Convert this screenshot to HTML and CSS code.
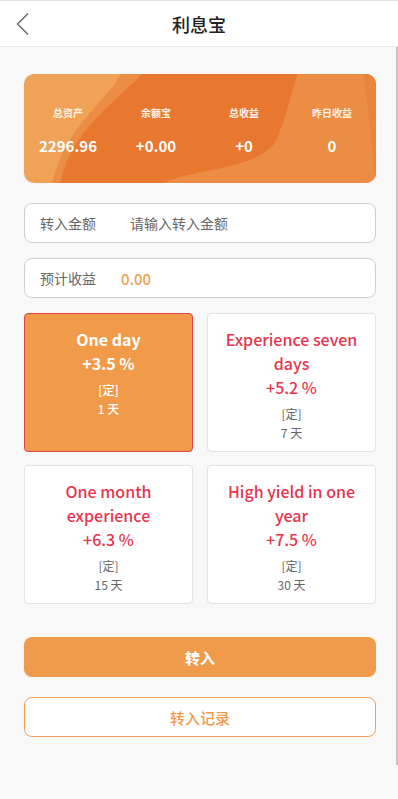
FILE: index.html
```html
<!DOCTYPE html>
<html lang="zh">
<head>
<meta charset="utf-8">
<title>利息宝</title>
<link rel="stylesheet" href="styles.css">
</head>
<body>
<header class="topbar">
  <svg class="back" width="14" height="24" viewBox="0 0 14 24"><path d="M12 1.5 L1.5 12 L12 22.5" fill="none" stroke="#666" stroke-width="1.4"/></svg>
  <h1 class="title">利息宝</h1>
</header>
<main class="main">
  <section class="summary">
    <svg class="waves" viewBox="0 0 352 109" preserveAspectRatio="none">
      <rect width="352" height="109" fill="#f0a257"/>
      <path d="M97 0 C80 30 42 52 28 109 H352 V0 Z" fill="#ec8d45"/>
      <path d="M118 0 C92 28 48 55 36 109 H140 C172 94 228 96 250 70 C262 48 266 20 274 0 Z" fill="#e8782f"/>
      <path d="M340 0 C345 40 348 80 352 109 V0 Z" fill="#e9843b"/>
    </svg>
    <div class="stat"><span class="stat-label">总资产</span><span class="stat-value">2296.96</span></div>
    <div class="stat"><span class="stat-label">余额宝</span><span class="stat-value">+0.00</span></div>
    <div class="stat"><span class="stat-label">总收益</span><span class="stat-value">+0</span></div>
    <div class="stat"><span class="stat-label">昨日收益</span><span class="stat-value">0</span></div>
  </section>

  <div class="field">
    <span class="field-label">转入金额</span>
    <span class="placeholder">请输入转入金额</span>
  </div>
  <div class="field field-gap">
    <span class="field-label">预计收益</span>
    <span class="estimate">0.00</span>
  </div>

  <section class="plans">
    <div class="plan active">
      <div class="plan-name">One day</div>
      <div class="plan-rate">+3.5 %</div>
      <div class="plan-type">[定]</div>
      <div class="plan-days">1 天</div>
    </div>
    <div class="plan">
      <div class="plan-name">Experience seven days</div>
      <div class="plan-rate">+5.2 %</div>
      <div class="plan-type">[定]</div>
      <div class="plan-days">7 天</div>
    </div>
    <div class="plan">
      <div class="plan-name">One month experience</div>
      <div class="plan-rate">+6.3 %</div>
      <div class="plan-type">[定]</div>
      <div class="plan-days">15 天</div>
    </div>
    <div class="plan">
      <div class="plan-name">High yield in one year</div>
      <div class="plan-rate">+7.5 %</div>
      <div class="plan-type">[定]</div>
      <div class="plan-days">30 天</div>
    </div>
  </section>

  <button class="btn btn-primary">转入</button>
  <button class="btn btn-outline">转入记录</button>
</main>
</body>
</html>
```
FILE: styles.css
```css
* { box-sizing: border-box; }
html, body { margin: 0; padding: 0; }
body {
  background: #f8f8f8;
  font-family: "Noto Sans CJK SC", "Noto Sans", sans-serif;
  color: #333;
  width: 398px;
}
.topbar {
  height: 47px;
  background: #fff;
  border-top: 1px solid #e2e2e2;
  border-bottom: 1px solid #e8e8e8;
  display: flex;
  align-items: center;
  justify-content: center;
  position: relative;
}
.back {
  position: absolute;
  left: 16px;
  top: 11px;
}
.title {
  margin: 0;
  font-size: 18px;
  font-weight: 500;
  color: #222;
  line-height: 24px;
}
.main {
  height: 718px;
  padding: 27px 20px 0 24px;
  border-right: 2px solid #c4c4c4;
  display: flex;
  flex-direction: column;
}
.summary {
  position: relative;
  height: 109px;
  border-radius: 10px;
  overflow: hidden;
  display: grid;
  grid-template-columns: repeat(4, 1fr);
  padding-top: 31px;
}
.waves {
  position: absolute;
  left: 0; top: 0;
  width: 100%;
  height: 100%;
}
.stat {
  position: relative;
  display: flex;
  flex-direction: column;
  align-items: center;
  color: #fff;
}
.stat-label {
  font-size: 10px;
  font-weight: 700;
  line-height: 16px;
  color: #fdf1e6;
}
.stat-value {
  font-size: 15px;
  font-weight: 700;
  line-height: 22px;
  margin-top: 14px;
}
.field {
  margin-top: 20px;
  height: 40px;
  background: #fff;
  border: 1px solid #cfcfcf;
  border-radius: 8px;
  display: flex;
  align-items: center;
  padding-left: 15px;
}
.field-gap { margin-top: 15px; }
.field-label {
  font-size: 14px;
  color: #666;
  width: 90px;
}
.placeholder {
  font-size: 14px;
  color: #666;
}
.estimate {
  font-size: 15px;
  color: #f0a050;
  font-weight: 500;
  margin-left: -9px;
}
.plans {
  margin-top: 15px;
  display: grid;
  grid-template-columns: 1fr 1fr;
  column-gap: 14px;
  row-gap: 13px;
}
.plan {
  height: 139px;
  background: #fff;
  border: 1px solid #e2e2e2;
  border-radius: 4px;
  padding: 13px 10px 0;
  text-align: center;
  color: #e8344e;
}
.plan.active {
  background: #f09a4a;
  border-color: #e2454c;
  color: #fff;
}
.plan-name, .plan-rate {
  font-size: 16px;
  font-weight: 500;
  line-height: 24px;
}
.plan.active .plan-name, .plan.active .plan-rate { font-weight: 700; }
.plan-type {
  margin-top: 5px;
  font-size: 12px;
  line-height: 19px;
  color: #666;
}
.plan-days {
  font-size: 12px;
  line-height: 19px;
  color: #666;
}
.plan.active .plan-type, .plan.active .plan-days { color: #fff; font-weight: 500; }
.btn {
  display: block;
  width: 100%;
  height: 40px;
  border-radius: 8px;
  font-family: inherit;
  font-size: 15px;
  padding: 0;
}
.btn-primary {
  margin-top: 33px;
  background: #f09b4b;
  border: none;
  color: #fff;
  font-weight: 700;
}
.btn-outline {
  margin-top: 20px;
  background: #fff;
  border: 1px solid #efa05a;
  color: #ef9a4c;
  font-weight: 500;
}
```
